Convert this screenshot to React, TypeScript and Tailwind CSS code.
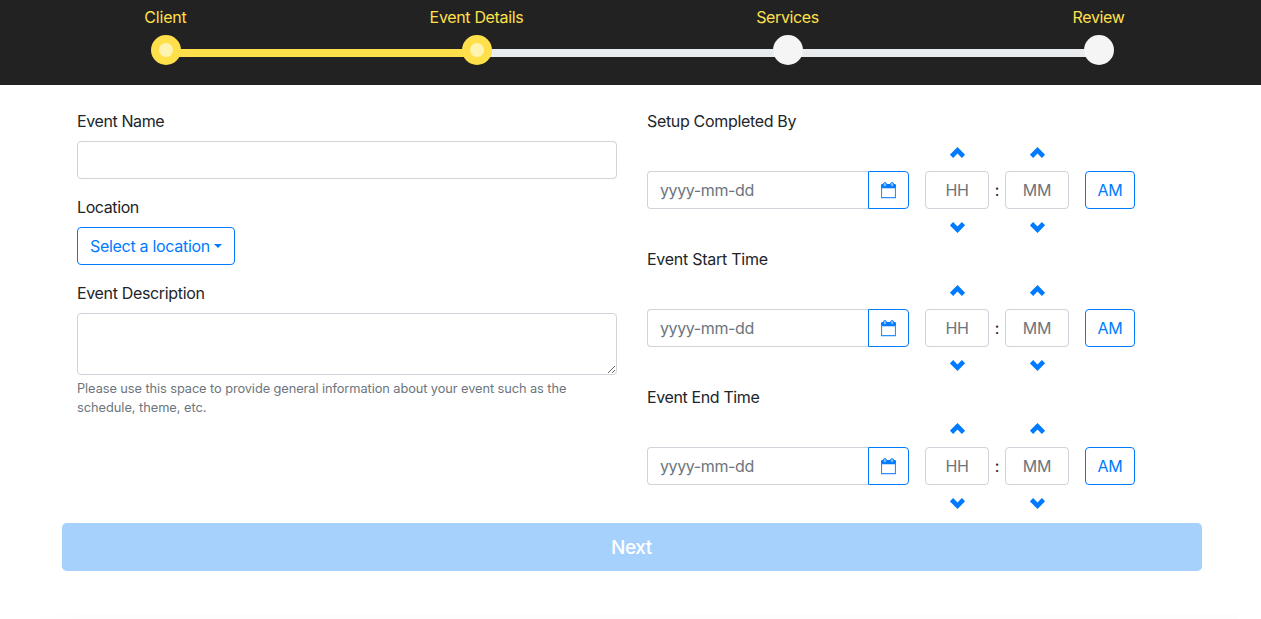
import React from "react";

type StepState = "done" | "todo";

const steps: { label: string; state: StepState; labelClass: string }[] = [
  { label: "Client", state: "done", labelClass: "tracking-[-0.2px]" },
  { label: "Event Details", state: "done", labelClass: "tracking-[-0.34px]" },
  { label: "Services", state: "todo", labelClass: "tracking-[-0.38px]" },
  { label: "Review", state: "todo", labelClass: "tracking-[-0.35px]" },
];

function Stepper() {
  return (
    <header className="flex h-[85px] shrink-0 bg-[#222222] pl-[10px]">
      {steps.map((step, i) => (
        <div key={step.label} className="relative flex w-[311px] flex-col items-center pt-[5px]">
          {i < steps.length - 1 && (
            <div
              className={`absolute left-1/2 top-[49px] h-2 w-full ${
                i === 0 ? "bg-[#ffe04b]" : "bg-[#e9ecef]"
              }`}
            />
          )}
          <span className={`whitespace-nowrap leading-6 text-[#ffe04b] ${step.labelClass}`}>{step.label}</span>
          <span
            className={`relative z-10 mt-[6px] flex size-[30px] items-center justify-center rounded-full ${
              step.state === "done" ? "bg-[#ffe04b]" : "bg-[#f5f5f5]"
            }`}
          >
            {step.state === "done" && <span className="size-[14px] rounded-full bg-[#fff3b0]" />}
          </span>
        </div>
      ))}
    </header>
  );
}

function CalendarIcon() {
  return (
    <svg width="15" height="17" viewBox="0 0 15 17" fill="none">
      <path d="M0 3.2Q0 2 1.2 2H13.8Q15 2 15 3.2V6.2H0Z" fill="#007bff" />
      <path d="M.5 5V15.6H14.5V5" stroke="#2a91ff" strokeWidth="1.2" />
      <rect x="2.4" y=".6" width="3" height="3.8" rx="1.4" fill="#8cc4ff" stroke="#1a88ff" strokeWidth="1" />
      <rect x="9.6" y=".6" width="3" height="3.8" rx="1.4" fill="#8cc4ff" stroke="#1a88ff" strokeWidth="1" />
    </svg>
  );
}

function Chevron({ down = false }: { down?: boolean }) {
  return (
    <svg width="16" height="11" viewBox="0 0 16 11" className={down ? "rotate-180" : ""}>
      <path
        d={
          down
            ? "M8.5 .1 16.1 7.7 12.9 11 8.5 6.6 4.1 11 .9 7.7Z"
            : "M7.5 .1 15.1 7.7 11.9 11 7.5 6.6 3.1 11 -.1 7.7Z"
        }
        fill="#007bff"
      />
    </svg>
  );
}

function TimeUnit({ placeholder }: { placeholder: string }) {
  return (
    <div className="flex w-16 flex-col">
      <button type="button" aria-label={`Increment ${placeholder}`} className="flex h-[38px] items-center justify-center pt-px pl-[2px]">
        <Chevron />
      </button>
      <input
        placeholder={placeholder}
        className="h-[38px] w-full rounded border border-[#ced4da] px-3 text-center tracking-[-0.3px] outline-none placeholder:text-[#6c757d]"
      />
      <button type="button" aria-label={`Decrement ${placeholder}`} className="flex h-[38px] items-center justify-center pb-px pl-[2px]">
        <Chevron down />
      </button>
    </div>
  );
}

function DateTimeField({ label, labelClass }: { label: string; labelClass: string }) {
  return (
    <div>
      <div className={`leading-6 ${labelClass}`}>{label}</div>
      <div className="flex items-center">
        <div className="flex">
          <input
            placeholder="yyyy-mm-dd"
            className="h-[38px] w-[221px] rounded-l border border-r-0 border-[#ced4da] px-3 tracking-[-0.38px] outline-none placeholder:text-[#6c757d]"
          />
          <button
            type="button"
            aria-label="Open calendar"
            className="flex h-[38px] w-[41px] items-center justify-center rounded-r border border-[#007bff]"
          >
            <CalendarIcon />
          </button>
        </div>
        <div className="ml-4 flex items-center">
          <TimeUnit placeholder="HH" />
          <span className="w-4 text-center leading-6">:</span>
          <TimeUnit placeholder="MM" />
          <button type="button" className="ml-4 h-[38px] w-[50px] rounded border border-[#007bff] tracking-[-0.3px] text-[#007bff]">
            AM
          </button>
        </div>
      </div>
    </div>
  );
}

export default function App() {
  return (
    <div className="flex h-[619px] flex-col overflow-hidden bg-white font-['Inter','Liberation_Sans',sans-serif] text-base text-[#212529]">
      <Stepper />
      <main className="ml-[62px] w-[1140px] shrink-0 pt-6">
        <div className="grid h-[414px] grid-cols-2">
          <section className="px-[15px]">
            <label className="block leading-6">
              <span className="block tracking-[-0.4px]">Event Name</span>
              <input className="mt-2 block h-[38px] w-full rounded border border-[#ced4da] px-3 outline-none" />
            </label>
            <div className="mt-4 leading-6 tracking-[-0.4px]">Location</div>
            <button
              type="button"
              className="mt-2 flex h-[38px] w-[158px] items-center rounded border border-[#007bff] pl-3 tracking-[-0.3px] text-[#007bff]"
            >
              <span className="w-[120px] whitespace-nowrap text-left">Select a location</span>
              <span className="ml-[4px] border-x-[4.8px] border-t-[4.8px] border-x-transparent border-t-[#007bff]" />
            </button>
            <label className="mt-4 block leading-6">
              <span className="block tracking-[-0.34px]">Event Description</span>
              <textarea rows={2} className="mt-2 block h-[62px] w-full rounded border border-[#ced4da] px-3 py-1.5 outline-none" />
            </label>
            <p className="mt-1 text-[12.8px] leading-[19.2px] tracking-[-0.077px] text-[#6c757d]">
              Please use this space to provide general information about your event such as the
              <br />
              <span className="tracking-[-0.03px]">schedule, theme, etc.</span>
            </p>
          </section>
          <section className="px-[15px]">
            <DateTimeField label="Setup Completed By" labelClass="tracking-[-0.33px]" />
            <DateTimeField label="Event Start Time" labelClass="tracking-[-0.26px]" />
            <DateTimeField label="Event End Time" labelClass="tracking-[-0.38px]" />
          </section>
        </div>
        <button
          type="button"
          disabled
          className="block h-12 w-full rounded-[4.8px] bg-[#a6d1fd] pr-px pt-[2px] text-[19px] font-medium tracking-[-0.4px] text-white"
        >
          Next
        </button>
      </main>
      <div className="mx-6 mt-[43px] h-[5px] shrink-0 bg-linear-to-r from-white via-[#fdfdfd] via-5% to-[#fdfdfd]" />
    </div>
  );
}
